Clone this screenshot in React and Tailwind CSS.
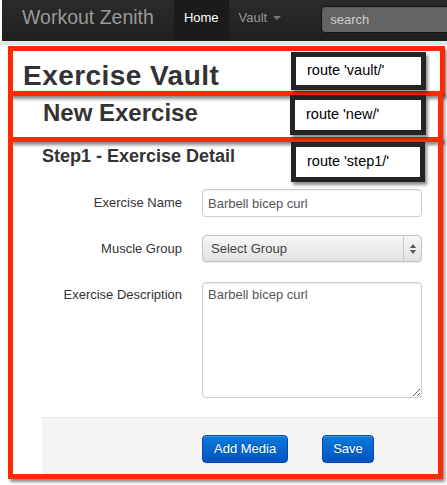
import React from "react";

function RedBox({ className }) {
  return (
    <div
      className={
        "absolute border-[5px] border-[#ff2a00] shadow-[2px_3px_3px_rgba(0,0,0,0.45)] pointer-events-none " +
        className
      }
    />
  );
}

function RouteBox({ className, children }) {
  return (
    <div
      className={
        "absolute border-[5px] border-[#242424] bg-white flex items-center pl-[11px] text-[14.5px] text-black shadow-[2px_3px_3px_rgba(0,0,0,0.45)] " +
        className
      }
    >
      {children}
    </div>
  );
}

export default function App() {
  return (
    <div className="relative w-[447px] h-[485px] bg-white overflow-hidden font-['Liberation_Sans',Arial,Helvetica,sans-serif] text-[#333]">
      {/* Navbar */}
      <nav className="ml-[2px] h-[41px] bg-gradient-to-b from-[#2b2b2b] to-[#1f1f1f] flex items-start">
        <span className="ml-[20px] pt-[7px] text-[19.5px] leading-[20px] text-[#999] whitespace-nowrap">
          Workout Zenith
        </span>
        <div className="ml-[20px] h-full flex">
          <a className="h-full px-[10px] pt-[7.5px] bg-[#1b1b1b] text-white text-[13px] leading-[20px]">
            Home
          </a>
          <a className="h-full px-[10px] pt-[7.5px] text-[#999] text-[13px] leading-[20px] flex items-start">
            Vault
            <span className="ml-[6px] mt-[8px] w-0 h-0 border-l-[4px] border-r-[4px] border-t-[4px] border-l-transparent border-r-transparent border-t-[#777]" />
          </a>
        </div>
        <input
          readOnly
          placeholder="search"
          className="ml-[30px] mt-[6px] w-[140px] h-[27px] rounded-[4px] bg-[#636363] border border-[#151515] pl-[8px] text-[13px] text-white placeholder:text-[#ccc] outline-none shadow-[inset_0_1px_2px_rgba(0,0,0,0.1)]"
        />
      </nav>
      <div className="h-[4px] bg-[#e6e6e6]" />

      {/* Headings */}
      <div className="pl-[23px] pt-[15px]">
        <h1 className="text-[28px] leading-[32px] font-bold tracking-[0.45px]">Exercise Vault</h1>
      </div>
      <div className="pl-[43px] mt-[7px]">
        <h2 className="text-[24px] leading-[28px] font-bold">New Exercise</h2>
      </div>
      <div className="pl-[42px] mt-[18px]">
        <h3 className="text-[18px] leading-[22px] font-bold">Step1 - Exercise Detail</h3>
      </div>

      {/* Form */}
      <form className="pl-[42px] mt-[22px]">
        <div className="flex items-center gap-[20px]">
          <label className="w-[140px] text-right text-[13px] leading-[28px]">Exercise Name</label>
          <input
            readOnly
            defaultValue="Barbell bicep curl"
            className="w-[220px] h-[28px] rounded-[4px] border border-[#ccc] pl-[5px] text-[13px] text-[#555] outline-none shadow-[inset_0_1px_1px_rgba(0,0,0,0.075)]"
          />
        </div>
        <div className="flex items-center gap-[20px] mt-[18px]">
          <label className="w-[140px] text-right text-[13px] leading-[27px]">Muscle Group</label>
          <div className="w-[220px] h-[27px] rounded-[4px] border border-[#c4c4c4] bg-gradient-to-b from-[#f7f7f7] to-[#e2e2e2] flex items-center shadow-[0_1px_1px_rgba(0,0,0,0.08)]">
            <span className="flex-1 pl-[8px] text-[13px] text-[#444]">Select Group</span>
            <div className="w-[18px] h-full border-l border-[#c8c8c8] flex flex-col items-center justify-center gap-[2px]">
              <span className="w-0 h-0 border-l-[3px] border-r-[3px] border-b-[4px] border-l-transparent border-r-transparent border-b-[#555]" />
              <span className="w-0 h-0 border-l-[3px] border-r-[3px] border-t-[4px] border-l-transparent border-r-transparent border-t-[#555]" />
            </div>
          </div>
        </div>
        <div className="flex items-start gap-[20px] mt-[20px]">
          <label className="w-[140px] text-right text-[13px] leading-[26px]">Exercise Description</label>
          <textarea
            readOnly
            defaultValue="Barbell bicep curl"
            className="w-[220px] h-[116px] rounded-[4px] border border-[#ccc] pl-[5px] pt-[3px] text-[13px] leading-[18px] text-[#555] outline-none shadow-[inset_0_1px_1px_rgba(0,0,0,0.075)]"
          />
        </div>
        <div className="mt-[19px] w-[398px] h-[61px] bg-[#f5f5f5] border-t border-[#e5e5e5] pt-[17px] pl-[160px] flex items-start gap-[34px]">
          <button
            type="button"
            className="h-[28px] px-[11px] rounded-[4px] border border-[#0448a8] bg-gradient-to-b from-[#0e7bda] to-[#0452c2] text-white text-[13px] [text-shadow:0_-1px_0_rgba(0,0,0,0.25)] shadow-[inset_0_1px_0_rgba(255,255,255,0.2),0_1px_2px_rgba(0,0,0,0.05)]"
          >
            Add Media
          </button>
          <button
            type="button"
            className="h-[28px] px-[10px] rounded-[4px] border border-[#0448a8] bg-gradient-to-b from-[#0e7bda] to-[#0452c2] text-white text-[13px] [text-shadow:0_-1px_0_rgba(0,0,0,0.25)] shadow-[inset_0_1px_0_rgba(255,255,255,0.2),0_1px_2px_rgba(0,0,0,0.05)]"
          >
            Save
          </button>
        </div>
      </form>

      {/* Annotation overlays */}
      <RedBox className="left-[8px] top-[46px] w-[437px] h-[50px]" />
      <RedBox className="left-[8px] top-[91px] w-[435px] h-[51px]" />
      <RedBox className="left-[8px] top-[137px] w-[435px] h-[342px]" />

      <RouteBox className="left-[291px] top-[52px] w-[135px] h-[38px]">route 'vault/'</RouteBox>
      <RouteBox className="left-[290px] top-[95px] w-[136px] h-[40px]">route 'new/'</RouteBox>
      <RouteBox className="left-[291px] top-[142px] w-[134px] h-[40px]">route 'step1/'</RouteBox>
    </div>
  );
}
